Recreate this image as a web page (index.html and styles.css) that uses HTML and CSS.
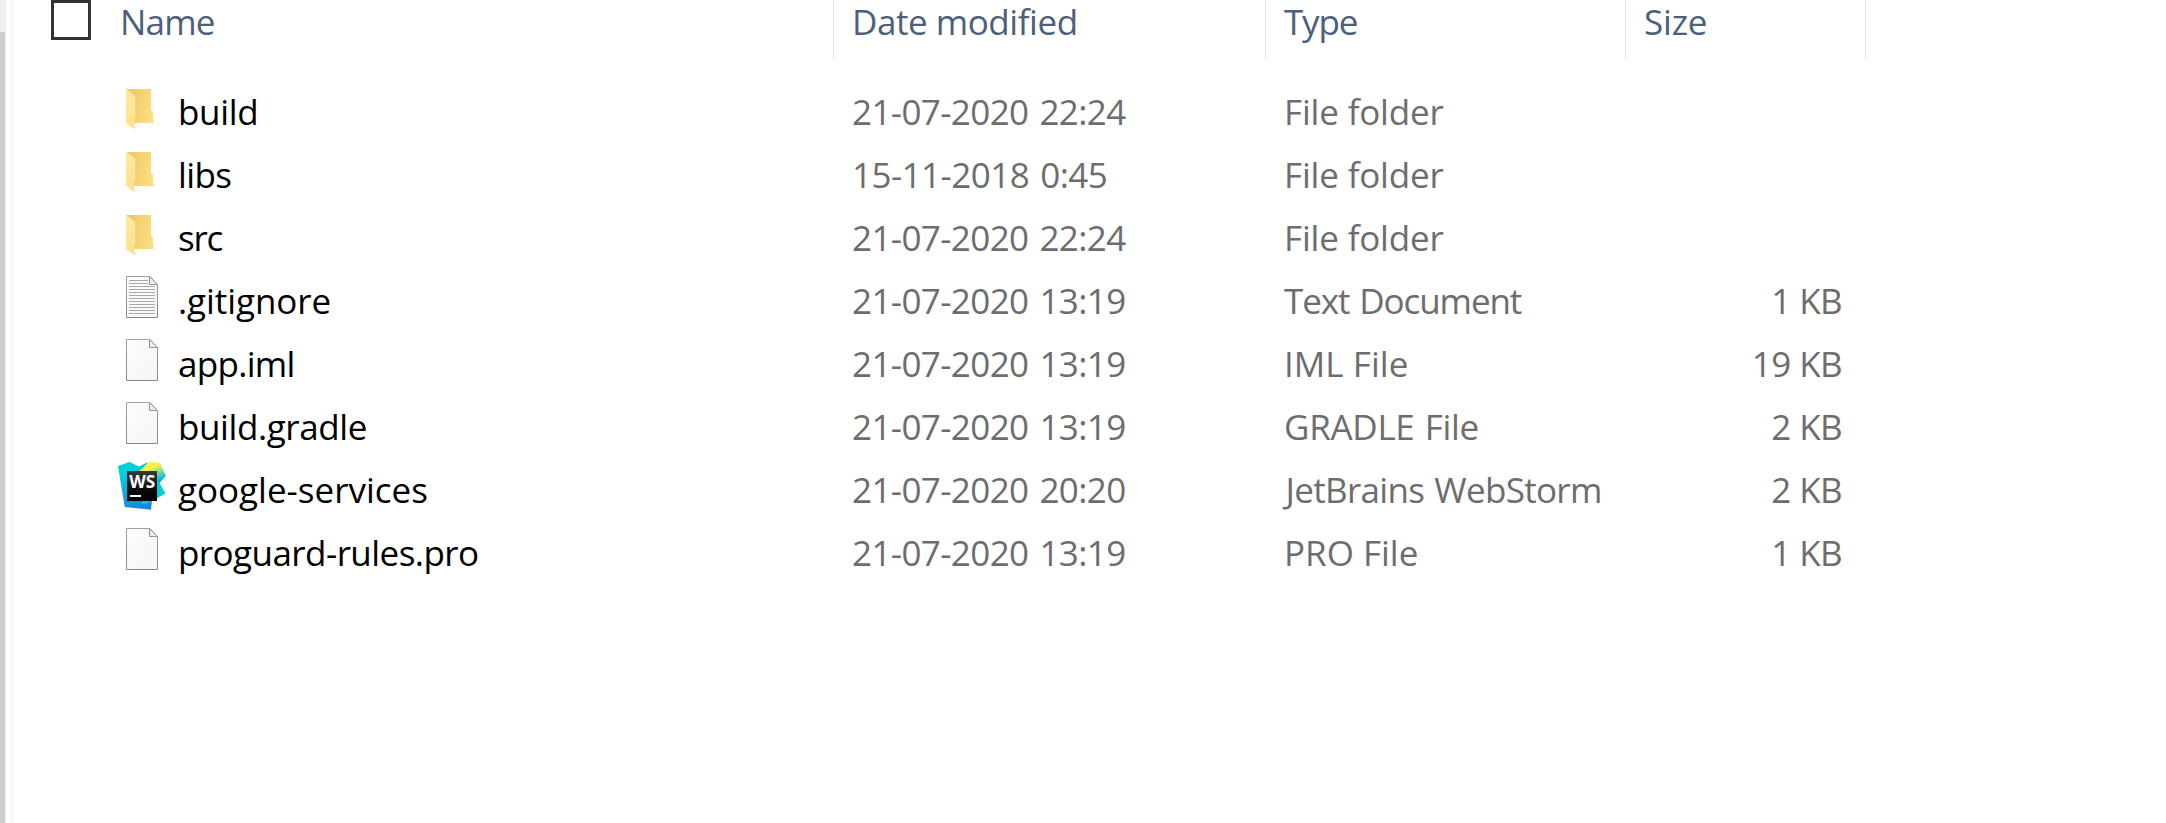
FILE: index.html
```html
<!DOCTYPE html>
<html lang="en">
<head>
<meta charset="utf-8">
<title>Files</title>
<link rel="stylesheet" href="styles.css">
</head>
<body>
<svg class="defs" width="0" height="0">
  <defs>
    <linearGradient id="back" x1="0" y1=".2" x2="1" y2=".5"><stop offset="0" stop-color="#ecc762"/><stop offset="1" stop-color="#fddd80"/></linearGradient>
    <linearGradient id="flap" x1="0" y1="0" x2=".4" y2="1"><stop offset="0" stop-color="#ffe9a6"/><stop offset="1" stop-color="#ffe18b"/></linearGradient>
    <linearGradient id="paper" x1="0" y1="0" x2="1" y2="1"><stop offset="0" stop-color="#fdfdfd"/><stop offset="1" stop-color="#f3f5f7"/></linearGradient>
    <linearGradient id="edge" x1="0" y1="0" x2="0" y2="1"><stop offset="0" stop-color="#a2a2a2"/><stop offset="1" stop-color="#868686"/></linearGradient>
    <linearGradient id="cyan" x1=".3" y1="0" x2=".4" y2="1"><stop offset=".25" stop-color="#00d0dc"/><stop offset="1" stop-color="#1c82e0"/></linearGradient>
    <linearGradient id="yellow" x1=".3" y1=".2" x2=".75" y2="1"><stop offset=".15" stop-color="#fff045"/><stop offset=".55" stop-color="#6cdc9c"/><stop offset=".75" stop-color="#10cddd"/><stop offset="1" stop-color="#208be0"/></linearGradient>
    <linearGradient id="tile" x1="0" y1="0" x2="0" y2="1"><stop offset="0" stop-color="#3a3a3a"/><stop offset=".7" stop-color="#050505"/><stop offset="1" stop-color="#000"/></linearGradient>
  </defs>
  <symbol id="folder" viewBox="0 0 48 48">
    <path d="M16 45L20 43.5L16 42ZM35 39L38 37.5L35 36.5Z" fill="#e9e9e9"/>
    <path d="M8 5H33V26L35 28V39H16L8 30Z" fill="url(#back)"/>
    <path d="M8 5L17 12V34L16 35V45L8 39Z" fill="url(#flap)"/>
    <path d="M8.5 5.4L16.6 12V34" fill="none" stroke="#fff0c0" stroke-width=".7"/>
  </symbol>
  <symbol id="file" viewBox="0 0 48 48">
    <path d="M8.5 3.5H32L39.5 11.5V44.5H8.5Z" fill="url(#paper)" stroke="url(#edge)"/>
    <path d="M31.5 3.5V11.5H39.5Z" fill="#ebebeb" stroke="#969696"/>
  </symbol>
  <symbol id="text" viewBox="0 0 48 48">
    <use href="#file"/>
    <path d="M11 7.5H30M11 10.5H30M11 13.5H37M11 16.5H37M11 19.5H37M11 22.5H37M11 25.5H37M11 28.5H37M11 31.5H37M11 34.5H37M11 37.5H37M11 40.5H37" stroke="#a9a9ab"/>
  </symbol>
</svg>
<div class="window">
  <div class="scroll"><div class="thumb"></div></div>
  <div class="divider"></div>
  <main class="list">
    <div class="head">
      <div class="name"><span class="check"></span><span class="label">Name</span></div>
      <div class="cell">Date modified</div>
      <div class="cell">Type</div>
      <div class="cell">Size</div>
    </div>
    <div class="rows">
      <div class="row r-build"><svg class="icon"><use href="#folder"/></svg><div class="title">build</div><div class="date">21-07-2020 22:24</div><div class="type">File folder</div><div class="size"></div></div>
      <div class="row r-libs"><svg class="icon"><use href="#folder"/></svg><div class="title">libs</div><div class="date">15-11-2018 0:45</div><div class="type">File folder</div><div class="size"></div></div>
      <div class="row r-src"><svg class="icon"><use href="#folder"/></svg><div class="title">src</div><div class="date">21-07-2020 22:24</div><div class="type">File folder</div><div class="size"></div></div>
      <div class="row r-git"><svg class="icon"><use href="#text"/></svg><div class="title">.gitignore</div><div class="date">21-07-2020 13:19</div><div class="type">Text Document</div><div class="size">1 KB</div></div>
      <div class="row r-iml"><svg class="icon"><use href="#file"/></svg><div class="title">app.iml</div><div class="date">21-07-2020 13:19</div><div class="type">IML File</div><div class="size">19 KB</div></div>
      <div class="row r-gradle"><svg class="icon"><use href="#file"/></svg><div class="title">build.gradle</div><div class="date">21-07-2020 13:19</div><div class="type">GRADLE File</div><div class="size">2 KB</div></div>
      <div class="row r-google">
        <svg class="icon" viewBox="0 0 48 48">
          <path d="M0 4L11.5 0L21 4.5L29 .5L40 16L34 38L33 47.8L6.7 45Z" fill="url(#cyan)"/>
          <path d="M26 8L42 12L41.5 21L47.5 31.5L30 41L24 42Z" fill="#00ccd8"/>
          <path d="M20.5 10L31 0L42 .5L47.8 14L41.5 21L36 14Z" fill="url(#yellow)"/>
          <rect x="9" y="9" width="30" height="30" fill="url(#tile)"/>
          <text x="11.2" y="26" class="ws" textLength="26" lengthAdjust="spacingAndGlyphs">WS</text>
          <path d="M12 34H23" stroke="#fff" stroke-width="2"/>
        </svg>
        <div class="title">google-services</div><div class="date">21-07-2020 20:20</div><div class="type">JetBrains WebStorm</div><div class="size">2 KB</div></div>
      <div class="row r-pro"><svg class="icon"><use href="#file"/></svg><div class="title">proguard-rules.pro</div><div class="date">21-07-2020 13:19</div><div class="type">PRO File</div><div class="size">1 KB</div></div>
    </div>
  </main>
</div>
</body>
</html>
```
FILE: styles.css
```css
* { box-sizing: border-box; }
body {
  margin: 0;
  background: #fff;
  color: #6d6d6d;
  font-family: "Open Sans", "Segoe UI", sans-serif;
  font-size: 35px;
  white-space: nowrap;
  overflow: hidden;
}
.defs { display: block; }
.window { display: flex; height: 823px; }
.scroll { width: 6px; background: #f0f0f0; padding-top: 32px; }
.thumb { width: 5px; height: 791px; background: #cdcdcd; }
.divider { width: 4px; margin-left: 4px; background: #f7f7f7; }

.head {
  display: grid;
  grid-template-columns: 819px 432px 360px 241px;
  height: 59px;
  line-height: 43px;
  color: #4c607a;
}
.name { display: flex; padding-left: 37px; }
.check { width: 40px; height: 40px; border: 3px solid #333; }
.label { margin-left: 29px; letter-spacing: -.8px; }
.cell { border-left: 1px solid #e5e5e5; padding-left: 18px; letter-spacing: -.45px; }
.cell:nth-child(3) { letter-spacing: -1.2px; }
.cell:last-child { border-right: 1px solid #e5e5e5; letter-spacing: -.2px; }

.rows { padding-top: 21px; }
.row {
  display: grid;
  grid-template-columns: 60px 674px 432px 360px 198px;
  height: 63px;
  line-height: 63px;
  padding-left: 104px;
}
.icon { width: 48px; height: 48px; margin-top: 4px; }
.ws { font: bold 18px "Open Sans", sans-serif; fill: #fff; }
.title { color: #000; }
.date { letter-spacing: -.62px; word-spacing: 2.5px; }
.type { letter-spacing: -.17px; }
.size { text-align: right; letter-spacing: -.7px; word-spacing: .5px; }

.r-build .title { letter-spacing: -.31px; }
.r-libs .title { letter-spacing: -.6px; }
.r-libs .date { letter-spacing: -.55px; }
.r-src .title { letter-spacing: -1.2px; }
.r-git .title { letter-spacing: -.07px; }
.r-iml .title { letter-spacing: -.7px; }
.r-gradle .title { letter-spacing: -.41px; }
.r-google .title { letter-spacing: 0; }
.r-pro .title { letter-spacing: -.56px; }
.r-git .type { letter-spacing: -1.1px; word-spacing: 2px; }
.r-iml .type { letter-spacing: .05px; }
.r-gradle .type { letter-spacing: -.3px; word-spacing: 1.5px; }
.r-google .type { letter-spacing: -.67px; word-spacing: 1.5px; padding-left: 1.5px; }
.r-pro .type { letter-spacing: 0; }
```
